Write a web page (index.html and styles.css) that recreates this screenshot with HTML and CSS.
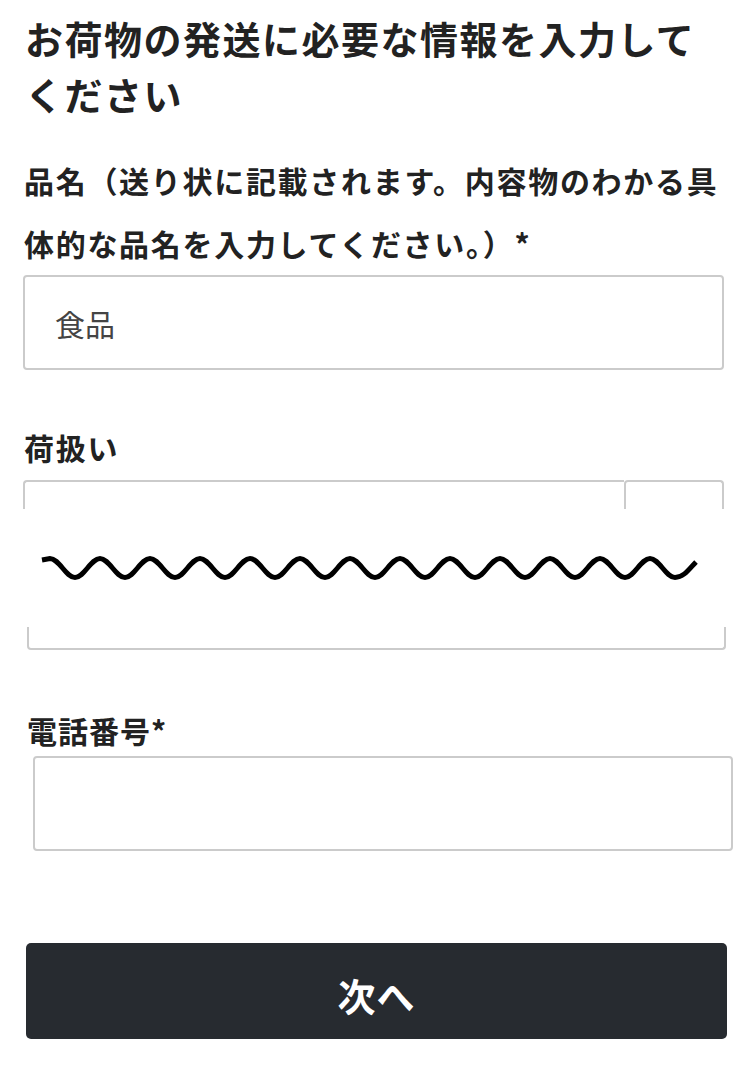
FILE: index.html
```html
<!DOCTYPE html>
<html lang="ja">
<head>
    <meta charset="UTF-8">
    <meta name="viewport" content="width=device-width, initial-scale=1.0">
    <title>お荷物の発送</title>
    <link rel="stylesheet" href="styles.css">
</head>
<body>
    <main class="form-page">
        <section class="form-top">
            <h1 class="form-title">お荷物の発送に必要な情報を入力してください</h1>

            <div class="field field--item">
                <label class="field-label" for="item">品名（送り状に記載されます。内容物のわかる具体的な品名を入力してください。）*</label>
                <input id="item" class="text-input" type="text" value="食品">
            </div>

            <div class="field field--handling">
                <label class="field-label">荷扱い</label>
                <!-- only the top edge of the select is visible above the cut -->
                <div class="select-top">
                    <div class="select-main"></div>
                    <div class="select-arrow"></div>
                </div>
            </div>
        </section>

        <div class="snip">
            <svg class="snip-wave" viewBox="0 0 750 30" width="750" height="30">
                <path d="M42 7 L50 5.5 C59 5.5 66 24.5 75 24.5 S91 5.5 100 5.5 S116 24.5 125 24.5 S141 5.5 150 5.5 S166 24.5 175 24.5 S191 5.5 200 5.5 S216 24.5 225 24.5 S241 5.5 250 5.5 S266 24.5 275 24.5 S291 5.5 300 5.5 S316 24.5 325 24.5 S341 5.5 350 5.5 S366 24.5 375 24.5 S391 5.5 400 5.5 S416 24.5 425 24.5 S441 5.5 450 5.5 S466 24.5 475 24.5 S491 5.5 500 5.5 S516 24.5 525 24.5 S541 5.5 550 5.5 S566 24.5 575 24.5 S591 5.5 600 5.5 S616 24.5 625 24.5 S641 5.5 650 5.5 S666 24.5 675 24.5 C684 24.5 690 15 696 9" fill="none" stroke="#000" stroke-width="5"/>
            </svg>
        </div>

        <section class="form-bottom">
            <div class="box-bottom"></div>

            <label class="field-label phone-label" for="phone">電話番号*</label>
            <input id="phone" class="text-input phone-input" type="tel">

            <button class="next-btn" type="button">次へ</button>
        </section>
    </main>
</body>
</html>
```

FILE: styles.css
```css
body {
    margin: 0;
    padding: 0;
    background: #fff;
    color: #222;
    font-family: 'Noto Sans CJK JP', 'Noto Sans', sans-serif;
}
.form-page {
    width: 750px;
    height: 1068px;
    overflow: hidden;
}
.form-top {
    padding: 10px 26px 0 23px;
}
.form-title {
    margin: 0;
    padding-left: 2px;
    font-size: 38px;
    line-height: 56px;
    font-weight: bold;
    letter-spacing: 1.5px;
}
.field-label {
    display: block;
    padding-left: 1px;
    font-size: 30px;
    line-height: 63px;
    font-weight: bold;
    letter-spacing: 1.7px;
}
.field--item {
    margin-top: 27px;
}
.field--handling {
    margin-top: 46px;
}
.text-input {
    display: block;
    width: 100%;
    height: 95px;
    margin: 0;
    padding: 0 30px;
    box-sizing: border-box;
    border: 2px solid #cbcbcb;
    border-radius: 4px;
    background: #fff;
    color: #444;
    font-family: 'Noto Sans CJK JP', 'Noto Sans', sans-serif;
    font-size: 30px;
    outline: none;
}
.select-top {
    display: flex;
    height: 29px;
    margin-top: 1px;
}
.select-main {
    flex: 1;
    border-top: 2px solid #cbcbcb;
    border-left: 2px solid #cbcbcb;
    border-radius: 4px 0 0 0;
}
.select-arrow {
    width: 96px;
    border: 2px solid #cbcbcb;
    border-bottom: none;
    border-radius: 4px 4px 0 0;
}
.snip {
    display: flex;
    align-items: center;
    height: 118px;
}
.snip-wave {
    display: block;
}
.box-bottom {
    height: 23px;
    margin: 0 24px 0 27px;
    box-sizing: border-box;
    border: 2px solid #cbcbcb;
    border-top: none;
    border-radius: 0 0 4px 4px;
}
.phone-label {
    margin: 60px 0 0 26px;
    line-height: 40px;
    letter-spacing: 1px;
}
.phone-input {
    width: 700px;
    margin: 6px 0 0 33px;
}
.next-btn {
    display: block;
    width: 701px;
    height: 96px;
    margin: 92px 0 0 26px;
    padding: 6px 0 0;
    border: none;
    border-radius: 5px;
    background: #272b30;
    color: #fff;
    font-family: 'Noto Sans CJK JP', 'Noto Sans', sans-serif;
    font-size: 38px;
    font-weight: bold;
    letter-spacing: 1px;
    cursor: pointer;
}
```
